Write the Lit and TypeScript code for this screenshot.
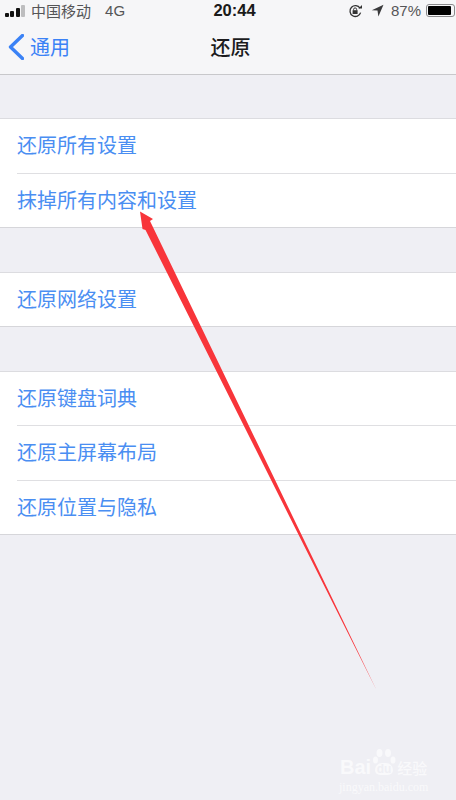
import { LitElement, html, css, svg } from "lit";
import { customElement } from "lit/decorators.js";

const sections = [
  ["还原所有设置", "抹掉所有内容和设置"],
  ["还原网络设置"],
  ["还原键盘词典", "还原主屏幕布局", "还原位置与隐私"],
];

@customElement("app-root")
export class AppRoot extends LitElement {
  static styles = css`
    :host {
      display: block;
      position: relative;
      width: 456px;
      height: 800px;
      overflow: hidden;
      background: #efeff4;
      font-family: "Liberation Sans", "Noto Sans CJK SC", sans-serif;
    }
    .head {
      height: 75px;
      box-sizing: border-box;
      background: #f6f6f8;
      border-bottom: 1px solid #c8c8cb;
      display: flex;
      flex-direction: column;
    }
    .status {
      height: 15px;
      display: grid;
      grid-template-columns: 1fr auto 1fr;
      align-items: center;
      color: #3a3a3c;
      font-size: 15px;
      padding: 0 1px 0 5px;
    }
    .sl, .sr { display: flex; align-items: center; }
    .sr { justify-content: flex-end; }
    .bars { display: flex; align-items: flex-end; gap: 1.5px; margin-right: 6px; height: 13px; }
    .bars i { width: 3.900px; background: #111; border-radius: 1px; }
    .bars i.off { background: #bdbdbf; }
    .carrier { color: #555557; }
    .net { margin-left: 14px; color: #555557; }
    .time { font-weight: 700; color: #1a1a1a; font-size: 16.5px; margin-left: 9px; }
    .pct { color: #555557; margin: 0 5px 0 7px; font-size: 15px; }
    .battery {
      width: 29px; height: 13px; box-sizing: border-box;
      border: 1px solid #8a8a8c; border-radius: 3px; padding: 1px;
      display: flex;
    }
    .battery i { flex: 1; background: #000; border-radius: 1px; margin-right: 2px; }
    .lockic { margin-right: 8px; }
    .nav {
      flex: 1;
      display: grid;
      grid-template-columns: 1fr auto 1fr;
      align-items: center;
      font-size: 20px;
      padding-top: 4px;
    }
    .back { display: flex; align-items: center; color: #3b82f6; padding-left: 8px; gap: 6px; }
    .title { color: #1c1c1e; font-weight: 500; padding-left: 5px; }
    .sec {
      margin-top: 43.5px;
      background: #fff;
      border-top: 1px solid #dcdce0;
      border-bottom: 1px solid #d6d6da;
    }
    .head + .sec { margin-top: 43px; }
    .row {
      height: 53.5px;
      box-sizing: border-box;
      display: flex;
      align-items: center;
      margin-left: 17px;
      font-size: 20px;
      color: #4a8ef2;
      padding-bottom: 2px;
    }
    .row + .row { border-top: 1px solid #dfdfe2; height: 54.5px; }
    .arrow { position: absolute; left: 0; top: 0; pointer-events: none; }
    .mark {
      position: absolute;
      left: 340px;
      top: 757px;
      color: #f9f9fb;
      line-height: 1;
    }
    .brand { display: flex; align-items: center; font-family: "Liberation Sans", sans-serif; font-weight: 700; font-size: 20px; }
    .brand .du {
      background: #f9f9fb; color: #efeff4; font-size: 12px; width: 18px; height: 12px;
      text-align: center; border-radius: 7px 7px 5px 5px; margin: 3px 4px 0 4px;
    }
    .brand .cn { font-size: 15px; font-family: "Noto Sans CJK SC", sans-serif; font-weight: 500; }
    .url { font-family: "Liberation Serif", serif; font-size: 12px; margin-top: 4px; margin-left: -1px; white-space: nowrap; }
    .paw { position: absolute; left: 33px; top: -8px; }
  `;

  render() {
    return html`
      <div class="head">
        <div class="status">
          <div class="sl">
            <div class="bars">
              <i style="height:4px"></i><i style="height:6px"></i><i style="height:9px"></i><i class="off" style="height:12px"></i>
            </div>
            <span class="carrier">中国移动</span><span class="net">4G</span>
          </div>
          <div class="time">20:44</div>
          <div class="sr">
            <svg class="lockic" width="15" height="14" viewBox="0 0 15 14">
              <path d="M12.6 8.6A5.4 5.4 0 1 1 12 4.2" fill="none" stroke="#333" stroke-width="1.3"/>
              <path d="M10.4 4.4h3.6V.9z" fill="#333"/>
              <rect x="4.6" y="6.2" width="5" height="3.8" fill="#333"/>
              <path d="M5.6 6.400V5.400a1.500 1.500 0 0 1 3 0v1" fill="none" stroke="#333"/>
            </svg>
            <svg width="13" height="13" viewBox="0 0 13 13"><path d="M12.5.8L.8 6.2l5.700.4.9 5.800z" fill="#3a3a3c"/></svg>
            <span class="pct">87%</span>
            <div class="battery"><i></i></div>
          </div>
        </div>
        <div class="nav">
          <div class="back">
            <svg width="16" height="26" viewBox="0 0 16 26"><path d="M14.5 1.500L2.500 13l12 11.500" fill="none" stroke="#3b82f6" stroke-width="3.400" stroke-linecap="round" stroke-linejoin="round"/></svg>
            <span>通用</span>
          </div>
          <div class="title">还原</div>
          <div></div>
        </div>
      </div>
      ${sections.map(
        (s) => html`<div class="sec">${s.map((t) => html`<div class="row">${t}</div>`)}</div>`
      )}
      <svg class="arrow" width="456" height="800" viewBox="0 0 456 800">
        ${svg`<path d="M140 211.500L153 219L150 221L376 689L145.500 230L142.500 229Z" fill="#f8353a"/>`}
      </svg>
      <div class="mark">
        <svg class="paw" width="24" height="16" viewBox="0 0 24 16" fill="#f9f9fb">
          <ellipse cx="2.500" cy="11" rx="2.500" ry="3.500"/><ellipse cx="6.500" cy="4" rx="3" ry="4"/><ellipse cx="15" cy="4" rx="3" ry="4"/><ellipse cx="20" cy="11" rx="2.500" ry="3.500"/>
        </svg>
        <div class="brand"><span>Bai</span><span class="du">du</span><span class="cn">经验</span></div>
        <div class="url">jingyan.baidu.com</div>
      </div>
    `;
  }
}
